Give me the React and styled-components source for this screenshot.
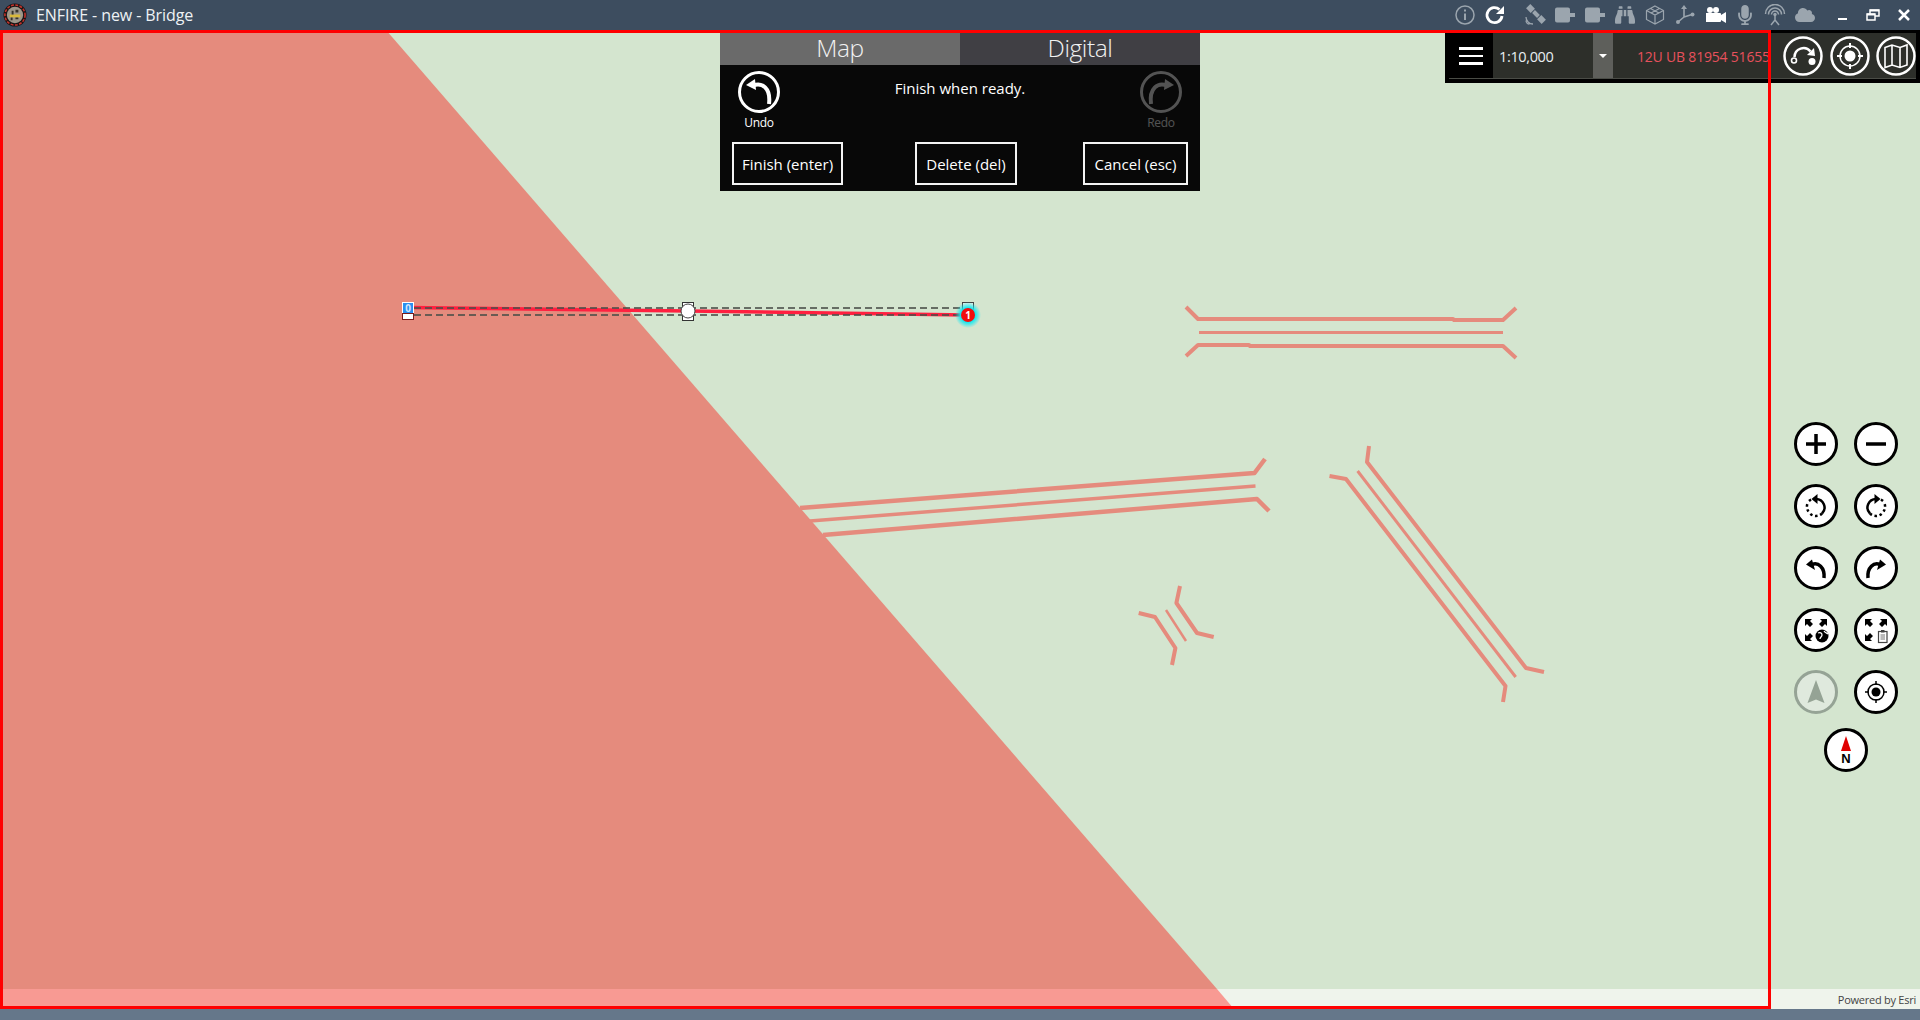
import React from 'react';
import styled, { createGlobalStyle } from 'styled-components';
import { FaBinoculars, FaMicrophone, FaCloud } from 'react-icons/fa';

const GlobalStyle = createGlobalStyle`
  * {
    padding: 0;
    margin: 0;
    box-sizing: border-box;
  }

  html, body, #root {
    height: 100%;
    overflow: hidden;
    font-family: "Open Sans", "Noto Sans", sans-serif;
  }
`;

const Page = styled.div`
  display: flex;
  flex-direction: column;
  height: 100vh;
  background: #65778a;
`;

const TitleBar = styled.header`
  display: flex;
  align-items: center;
  height: 30px;
  flex: none;
  padding-left: 3px;
  background: #3d4d5f;
`;

const Logo = styled.svg`
  width: 24px;
  height: 24px;
  flex: none;
`;

const Title = styled.h1`
  margin-left: 9px;
  font-size: 16px;
  font-weight: 400;
  letter-spacing: -0.08px;
  color: #eef2f5;
`;

const TitleIcons = styled.div`
  display: flex;
  align-items: center;
  margin-left: auto;
`;

const TitleIcon = styled.span`
  display: flex;
  align-items: center;
  justify-content: center;
  width: 30px;
  height: 30px;
  color: ${(p) => (p.$on ? '#ffffff' : '#9ba5ae')};
  svg {
    display: block;
  }
`;

const IconGap = styled.span`
  width: ${(p) => p.$w}px;
`;

const WindowButton = styled.span`
  display: flex;
  align-items: center;
  justify-content: center;
  width: ${(p) => p.$w}px;
  height: 30px;
  color: #ffffff;
`;

const MapArea = styled.main`
  position: relative;
  flex: 1;
  overflow: hidden;
  background: #d4e5cf;
`;

const StatusStrip = styled.footer`
  height: 11px;
  flex: none;
`;

const Canvas = styled.svg`
  position: absolute;
  inset: 0;
  width: 100%;
  height: 100%;
`;

const Attribution = styled.span`
  position: absolute;
  right: 4px;
  bottom: 2px;
  font-size: 11px;
  letter-spacing: -0.25px;
  color: #444;
`;

const Frame = styled.div`
  position: absolute;
  left: 0;
  top: 0;
  width: 1771px;
  height: 100%;
  border: 3px solid #ff0000;
  pointer-events: none;
`;

const EditPanel = styled.section`
  position: absolute;
  top: 3px;
  left: 50%;
  width: 480px;
  height: 158px;
  transform: translateX(-50%);
  background: #080808;
  color: #ffffff;
`;

const Tabs = styled.div`
  display: flex;
  height: 32px;
`;

const Tab = styled.div`
  display: flex;
  align-items: center;
  justify-content: center;
  flex: 1;
  padding-bottom: 3px;
  font-size: 24.5px;
  font-weight: 300;
  letter-spacing: -0.4px;
  color: #f2f2f2;
  background: ${(p) => (p.$active ? '#6a6a6a' : '#403f44')};
`;

const ActionRow = styled.div`
  display: grid;
  grid-template-columns: 46px 1fr 46px;
  height: 71px;
  padding: 6px 16px 0;
`;

const ActionItem = styled.div`
  display: flex;
  flex-direction: column;
  align-items: center;
  opacity: ${(p) => (p.$off ? 0.3 : 1)};
`;

const ActionLabel = styled.span`
  margin-top: 1px;
  font-size: 12px;
  letter-spacing: -0.3px;
`;

const Message = styled.p`
  padding-top: 7px;
  text-align: center;
  font-size: 15px;
`;

const ButtonRow = styled.div`
  display: grid;
  grid-template-columns: 183px 168px 105px;
  margin-top: 6px;
  padding: 0 12px;
`;

const PanelButton = styled.button`
  width: ${(p) => p.$w}px;
  height: 43px;
  padding-top: 1px;
  border: 2px solid #f4f4f4;
  background: transparent;
  font-family: inherit;
  font-size: 15px;
  color: #ffffff;
`;

const ScaleBar = styled.section`
  position: absolute;
  top: 0;
  right: 0;
  width: 475px;
  height: 53px;
  padding: 3px 4px 4px 0;
  background: #000000;
`;

const ScaleInner = styled.div`
  display: flex;
  height: 100%;
  margin-left: 4px;
  border-bottom: 1px solid #4a4c46;
  background: #2d2f2a;
`;

const MenuButton = styled.div`
  display: flex;
  flex-direction: column;
  align-items: center;
  justify-content: center;
  gap: 5px;
  width: 44px;
  flex: none;
  padding-top: 1px;
  background: #000000;
  span {
    width: 24px;
    height: 2.5px;
    background: #ffffff;
  }
`;

const ScaleValue = styled.div`
  display: flex;
  align-items: center;
  width: 100px;
  padding: 2px 0 0 6px;
  font-size: 14.5px;
  letter-spacing: -0.35px;
  color: #e8eef2;
`;

const ScaleDrop = styled.div`
  display: flex;
  align-items: center;
  justify-content: center;
  width: 20px;
  flex: none;
  background: #5e5f5b;
  &::after {
    content: '';
    border-left: 4px solid transparent;
    border-right: 4px solid transparent;
    border-top: 4px solid #ffffff;
  }
`;

const Coordinates = styled.div`
  display: flex;
  align-items: center;
  width: 158px;
  padding: 2px 0 0 24px;
  overflow: hidden;
  white-space: nowrap;
  font-size: 14px;
  letter-spacing: -0.2px;
  color: #e8515c;
`;

const BarIcons = styled.div`
  display: flex;
  align-items: center;
  gap: 6.5px;
  margin-left: 12px;
`;

const BarIcon = styled.svg`
  width: 40px;
  height: 40px;
  flex: none;
`;

const MapControls = styled.nav`
  position: absolute;
  left: 1794px;
  top: 392px;
  display: grid;
  grid-template-columns: 44px 44px;
  gap: 18px 16px;
`;

const RoundButton = styled.div`
  display: flex;
  align-items: center;
  justify-content: center;
  width: 44px;
  height: 44px;
  border-radius: 50%;
  border: 3px solid ${(p) => (p.$off ? '#95a395' : '#000000')};
  background: ${(p) => (p.$off ? '#dfe9dd' : '#ffffff')};
  ${(p) => p.$wide && 'grid-column: 1 / -1; justify-self: center; margin-top: -4px;'}
`;

const Glyph = styled.svg`
  width: 38px;
  height: 38px;
  flex: none;
`;

const Undo = ({ color = '#fff', size = 42, mirror }) => (
  <svg width={size} height={size} viewBox="0 0 42 42" fill="none">
    <circle cx="21" cy="21" r="19.5" stroke={color} strokeWidth="3" />
    <g transform={mirror ? 'translate(42 0) scale(-1 1)' : undefined}>
      <path d="M15 14.500C24 11 33 17 31 33" stroke={color} strokeWidth="4" />
      <path d="M8 14 17 8l1 11z" fill={color} />
    </g>
  </svg>
);

const ControlTurn = ({ mirror }) => (
  <g transform={mirror ? 'translate(38 0) scale(-1 1)' : undefined} fill="none" stroke="#000">
    <path d="M19 12a8.500 8.500 0 0 1 6 14.500" strokeWidth="2.500" />
    <path d="M25 26.500a8.500 8.500 0 0 1-12 0M11.500 24.500a8.500 8.500 0 0 1-1-8M12 14a8.500 8.500 0 0 1 7-2" strokeWidth="2.500" strokeDasharray="2.500 2.600" />
    <path d="M14.500 12 20.500 7v10z" fill="#000" stroke="none" />
  </g>
);

const ControlBack = ({ mirror }) => (
  <g transform={mirror ? 'translate(38 0) scale(-1 1)' : undefined} fill="none">
    <path d="M15 15.500C21 13 28 18 27 29" stroke="#000" strokeWidth="3.500" />
    <path d="M9 15.500 15 10.500l3 10.500z" fill="#000" />
  </g>
);

const FitArrows = () => (
  <g fill="#000">
    <path d="M8 8h7l-2 2 3 3-3 3-3-3-2 2z" />
    <path d="M30 8h-7l2 2-3 3 3 3 3-3 2 2z" />
    <path d="M8 30v-7l2 2 3-3 3 3-3 3 2 2z" />
  </g>
);

const FitGlobe = () => (
  <Glyph viewBox="0 0 38 38">
    <FitArrows />
    <circle cx="25" cy="25" r="6.500" fill="#000" />
    <path d="M21 22c2-1 4 0 4 2s-2 2-2 4M27 20c1 2 3 2 4 3" stroke="#fff" strokeWidth="1.300" fill="none" />
  </Glyph>
);

const FitSheet = () => (
  <Glyph viewBox="0 0 38 38">
    <FitArrows />
    <rect x="21.500" y="20.500" width="8.500" height="11" fill="#fff" stroke="#444" strokeWidth="1.200" />
    <path d="M23.500 24h4.500M23.500 26h4.500M23.500 28h4.500" stroke="#777" />
    <rect x="24" y="19" width="3.500" height="2.500" fill="#444" />
  </Glyph>
);

const Target = ({ stroke = '#000', r = 6, ring = 10, c = 19, w = 2 }) => (
  <g fill="none" stroke={stroke} strokeWidth={w}>
    <circle cx={c} cy={c} r={ring} />
    <circle cx={c} cy={c} r={r} fill={stroke} stroke="none" />
    <path d={`M${c} ${c - ring - 3}v4M${c} ${c + ring - 1}v4M${c - ring - 3} ${c}h4M${c + ring - 1} ${c}h4`} />
  </g>
);

const bridges = [
  { w: 4, d: 'M1186 307 1198 319H1453L1454 320H1503L1516 308' },
  { w: 3, d: 'M1199 332.500H1503' },
  { w: 4, d: 'M1186 356 1198 345H1249L1250 346H1503L1516 358' },
  { w: 4.500, d: 'M1265 459 1254.500 473 800 508' },
  { w: 3.500, d: 'M1255.500 486 810 521' },
  { w: 4.500, d: 'M1269 511 1257 499 823 535' },
  { w: 4, d: 'M1138.700 613 1155 617 1175.400 648 1172 665' },
  { w: 2.500, d: 'M1166 610 1186 641' },
  { w: 4, d: 'M1180 586 1176.400 603 1197 633 1213.700 637' },
  { w: 4, d: 'M1329.500 476 1346 479 1505.500 686 1503 702' },
  { w: 3, d: 'M1357.600 471 1515.700 677' },
  { w: 4, d: 'M1369 446 1367 462 1526 668 1544 672' },
];

const App = () => {
  return (
    <>
      <GlobalStyle />
      <Page>
        <TitleBar>
          <Logo viewBox="0 0 25 25">
            <circle cx="12.500" cy="12.500" r="12" fill="#1a1414" />
            <circle cx="12.500" cy="12.500" r="10.500" fill="none" stroke="#c8332c" strokeWidth="1.600" strokeDasharray="3 1.500" />
            <circle cx="12.500" cy="12.500" r="8.500" fill="#9d978a" />
            <path d="M7 12h11v3H7z" fill="#d9b93a" />
            <path d="M9 8h2v4H9zM13 7h3v3h-3zM8 15h2v3H8zM13 15h3v2h-3z" fill="#38342c" />
          </Logo>
          <Title>ENFIRE - new - Bridge</Title>
          <TitleIcons>
            <TitleIcon>
              <svg width="20" height="20" viewBox="0 0 20 20" fill="none" stroke="currentColor">
                <circle cx="10" cy="10" r="9" strokeWidth="1.500" />
                <path d="M10 8.500v6.500" strokeWidth="2" />
                <path d="M10 4.500v2" strokeWidth="2" />
              </svg>
            </TitleIcon>
            <TitleIcon $on>
              <svg width="22" height="22" viewBox="0 0 22 22" fill="none" stroke="currentColor">
                <path d="M18 12a7.500 7.500 0 1 1-2.500-6.500" strokeWidth="2.800" />
                <path d="M20 2v8h-8z" fill="currentColor" stroke="none" />
              </svg>
            </TitleIcon>
            <IconGap $w={10} />
            <TitleIcon>
              <svg width="22" height="22" viewBox="0 0 22 22" fill="none" stroke="currentColor">
                <g transform="rotate(-45 12 10)" fill="currentColor" stroke="none">
                  <rect x="9" y="-1" width="6" height="6.500" />
                  <rect x="10" y="6.500" width="4" height="7" />
                  <rect x="9" y="14.500" width="6" height="6.500" />
                </g>
                <path d="M2 13a7 7 0 0 0 7 7M2 16.500a3.500 3.500 0 0 0 3.500 3.500" strokeWidth="1.300" />
              </svg>
            </TitleIcon>
            <TitleIcon>
              <svg width="20" height="20" viewBox="0 0 20 20" fill="currentColor">
                <path d="M0 4.500a2 2 0 0 1 2-2h11a2 2 0 0 1 2 2V8h5v4h-5v3.500a2 2 0 0 1-2 2H2a2 2 0 0 1-2-2z" />
              </svg>
            </TitleIcon>
            <TitleIcon>
              <svg width="20" height="20" viewBox="0 0 20 20" fill="currentColor">
                <path d="M0 4.500a2 2 0 0 1 2-2h11a2 2 0 0 1 2 2V8h5v4h-5v3.500a2 2 0 0 1-2 2H2a2 2 0 0 1-2-2z" />
              </svg>
            </TitleIcon>
            <TitleIcon>
              <FaBinoculars size={20} />
            </TitleIcon>
            <TitleIcon>
              <svg width="20" height="20" viewBox="0 0 20 20" fill="none" stroke="currentColor" strokeWidth="1.200">
                <path d="M10 1 18.500 5.500v9L10 19l-8.500-4.500v-9zM1.500 5.500 10 10l8.500-4.500M10 10v9M5.500 3.500 14 8M14.500 3.500 6 8" />
              </svg>
            </TitleIcon>
            <TitleIcon>
              <svg width="20" height="20" viewBox="0 0 20 20" fill="none" stroke="currentColor" strokeWidth="1.600">
                <path d="M9 2v10M9 12l-6 5M9 12l8-2.500" />
                <path d="M9 0 6 4h6z" fill="currentColor" stroke="none" />
                <circle cx="3" cy="17" r="2" fill="currentColor" stroke="none" />
                <circle cx="17.500" cy="9.500" r="2" fill="currentColor" stroke="none" />
              </svg>
            </TitleIcon>
            <TitleIcon $on>
              <svg width="21" height="18" viewBox="0 0 21 18" fill="currentColor">
                <circle cx="5" cy="4" r="3" />
                <circle cx="11" cy="4" r="3" />
                <path d="M1 7h14a1 1 0 0 1 1 1v1l5-3v11l-5-3v1a1 1 0 0 1-1 1H1z" />
              </svg>
            </TitleIcon>
            <TitleIcon>
              <FaMicrophone size={20} />
            </TitleIcon>
            <TitleIcon>
              <svg width="22" height="22" viewBox="0 0 22 22" fill="none" stroke="currentColor" strokeWidth="1.500">
                <path d="M1.500 10a9.500 9.500 0 0 1 19 0M4.500 10.500a6.500 6.500 0 0 1 13 0M7.500 10.500a3.500 3.500 0 0 1 7 0" />
                <circle cx="11" cy="10.500" r="1.700" fill="currentColor" stroke="none" />
                <path d="M11 11v6M11 16l-4 5M11 16l4 5" />
              </svg>
            </TitleIcon>
            <TitleIcon>
              <FaCloud size={20} />
            </TitleIcon>
            <IconGap $w={8} />
            <WindowButton $w={30}>
              <svg width="10" height="10" viewBox="0 0 10 10"><path d="M0 8h9v2H0z" fill="currentColor" /></svg>
            </WindowButton>
            <WindowButton $w={30}>
              <svg width="14" height="12" viewBox="0 0 14 12" fill="none" stroke="currentColor" strokeWidth="1.500">
                <path d="M1 5h8v6H1zM4 5V1h9v6H9" />
                <path d="M4 1.500h9M1 5.500h8" strokeWidth="2" />
              </svg>
            </WindowButton>
            <WindowButton $w={32}>
              <svg width="12" height="12" viewBox="0 0 12 12" stroke="currentColor" strokeWidth="2.500"><path d="M1 1l10 10M11 1 1 11" /></svg>
            </WindowButton>
          </TitleIcons>
        </TitleBar>

        <MapArea>
          <Canvas viewBox="0 30 1920 979" preserveAspectRatio="none">
            <defs>
              <radialGradient id="vertexGlow">
                <stop offset="0.55" stopColor="#12e8f0" />
                <stop offset="1" stopColor="#12e8f0" stopOpacity="0" />
              </radialGradient>
            </defs>
            <rect x="0" y="989" width="1920" height="20" fill="#eff4ec" />
            <polygon points="0,30 386,30 1217,989 0,989" fill="#e58b7d" />
            <polygon points="0,989 1217,989 1234,1009 0,1009" fill="#f89a93" />
            <g fill="none" stroke="#e58b7d" strokeLinejoin="round">
              {bridges.map((b) => (
                <path key={b.d} d={b.d} strokeWidth={b.w} />
              ))}
            </g>

            <path d="M408 307.500 688 311 966 315" stroke="#ff2040" strokeWidth="3.500" fill="none" />
            <path d="M414 308H962M414 315H962" stroke="#4a4f48" strokeOpacity="0.8" strokeWidth="2" strokeDasharray="7 4" fill="none" />
            <rect x="402.500" y="302.500" width="11" height="11" fill="#2a8ff0" stroke="#fff" />
            <rect x="402.500" y="313.500" width="11" height="6" fill="#fff" stroke="#7a1a1a" />
            <text x="408" y="311.500" fontSize="10" fontFamily="Open Sans" fontWeight="700" fill="#cfe6ff" textAnchor="middle">0</text>
            <rect x="682.500" y="302.500" width="11" height="18" fill="#fff" stroke="#333" />
            <circle cx="688" cy="311" r="7" fill="#fff" stroke="#444" />
            <rect x="962.500" y="302.500" width="11" height="8" fill="#e8f0e6" stroke="#444" />
            <circle cx="968" cy="315" r="13" fill="url(#vertexGlow)" />
            <circle cx="968" cy="315" r="7" fill="#f20d0d" />
            <text x="968" y="319" fontSize="10" fontFamily="Open Sans" fontWeight="700" fill="#fff" textAnchor="middle">1</text>
          </Canvas>

          <Attribution>Powered by Esri</Attribution>

          <EditPanel>
            <Tabs>
              <Tab $active>Map</Tab>
              <Tab>Digital</Tab>
            </Tabs>
            <ActionRow>
              <ActionItem>
                <Undo />
                <ActionLabel>Undo</ActionLabel>
              </ActionItem>
              <Message>Finish when ready.</Message>
              <ActionItem $off>
                <Undo mirror />
                <ActionLabel>Redo</ActionLabel>
              </ActionItem>
            </ActionRow>
            <ButtonRow>
              <PanelButton $w={111}>Finish (enter)</PanelButton>
              <PanelButton $w={102}>Delete (del)</PanelButton>
              <PanelButton $w={105}>Cancel (esc)</PanelButton>
            </ButtonRow>
          </EditPanel>

          <ScaleBar>
            <ScaleInner>
              <MenuButton>
                <span />
                <span />
                <span />
              </MenuButton>
              <ScaleValue>1:10,000</ScaleValue>
              <ScaleDrop />
              <Coordinates>12U UB 81954 51655</Coordinates>
              <BarIcons>
                <BarIcon viewBox="0 0 40 40" fill="none" stroke="#fff">
                  <circle cx="20" cy="20" r="18.500" strokeWidth="2.500" />
                  <path d="M11.500 21a9 9 0 0 1 16-5.500" strokeWidth="2.500" />
                  <path d="M24 19 31 12l1 8z" fill="#fff" stroke="none" />
                  <circle cx="11" cy="24.500" r="2.500" strokeWidth="1.600" />
                  <circle cx="29" cy="25.500" r="3.500" fill="#fff" stroke="none" />
                </BarIcon>
                <BarIcon viewBox="0 0 40 40" fill="none" stroke="#fff">
                  <circle cx="20" cy="20" r="18.500" strokeWidth="2.500" />
                  <circle cx="20" cy="20" r="10" strokeWidth="1.500" />
                  <circle cx="20" cy="20" r="5.500" fill="#fff" stroke="none" />
                  <path d="M20 7v5M20 28v5M7 20h5M28 20h5" strokeWidth="2" />
                </BarIcon>
                <BarIcon viewBox="0 0 40 40" fill="none" stroke="#fff">
                  <circle cx="20" cy="20" r="18.500" strokeWidth="2.500" />
                  <path d="M9 11.500 16 9l8 2.500 7-2.500v20l-7 2.500-8-2.500-7 2.500zM16 9v20M24 11.500v20" strokeWidth="1.600" />
                </BarIcon>
              </BarIcons>
            </ScaleInner>
          </ScaleBar>

          <MapControls>
            <RoundButton>
              <Glyph viewBox="0 0 38 38"><path d="M19 9v20M9 19h20" stroke="#000" strokeWidth="3.500" /></Glyph>
            </RoundButton>
            <RoundButton>
              <Glyph viewBox="0 0 38 38"><path d="M9 19h20" stroke="#000" strokeWidth="3.500" /></Glyph>
            </RoundButton>
            <RoundButton>
              <Glyph viewBox="0 0 38 38"><ControlTurn /></Glyph>
            </RoundButton>
            <RoundButton>
              <Glyph viewBox="0 0 38 38"><ControlTurn mirror /></Glyph>
            </RoundButton>
            <RoundButton>
              <Glyph viewBox="0 0 38 38"><ControlBack /></Glyph>
            </RoundButton>
            <RoundButton>
              <Glyph viewBox="0 0 38 38"><ControlBack mirror /></Glyph>
            </RoundButton>
            <RoundButton><FitGlobe /></RoundButton>
            <RoundButton><FitSheet /></RoundButton>
            <RoundButton $off>
              <Glyph viewBox="0 0 38 38"><path d="M19 7 27.500 30 19 26.500 10.500 30z" fill="#95a395" /></Glyph>
            </RoundButton>
            <RoundButton>
              <Glyph viewBox="0 0 38 38"><Target r={4.5} ring={8} w={1.5} /></Glyph>
            </RoundButton>
            <RoundButton $wide>
              <Glyph viewBox="0 0 38 38">
                <path d="M19 5 24 20H14z" fill="#e00000" />
                <text x="19" y="32" fontSize="13" fontFamily="Liberation Sans" fontWeight="700" fill="#000" textAnchor="middle">N</text>
              </Glyph>
            </RoundButton>
          </MapControls>

          <Frame />
        </MapArea>
        <StatusStrip />
      </Page>
    </>
  );
};

export default App;
